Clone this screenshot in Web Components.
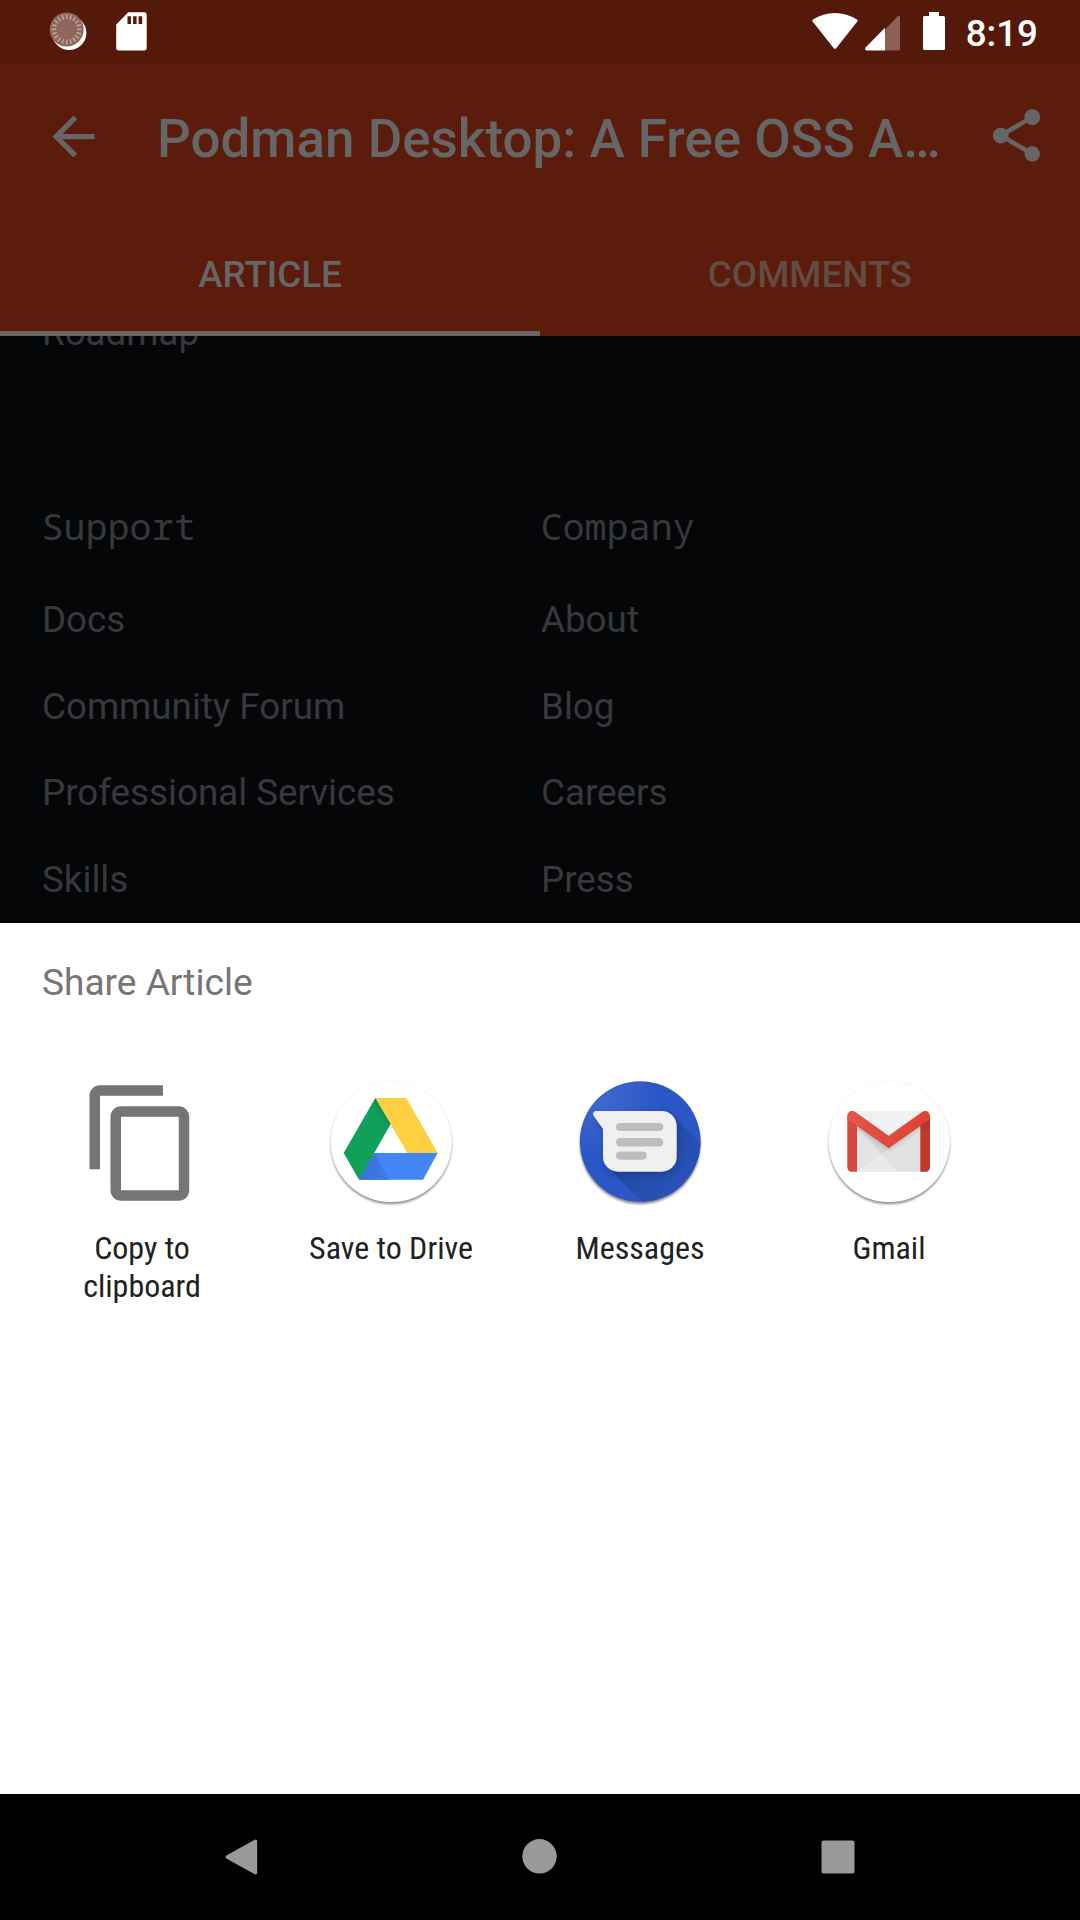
<!DOCTYPE html>
<html lang="en">
<head>
<meta charset="utf-8">
<title>Share Article</title>
<style>
html,body{margin:0;padding:0;background:#000}
body{width:1080px;height:1920px;overflow:hidden;font-family:Roboto,"Liberation Sans",sans-serif}
</style>
</head>
<body>
<phone-screen>
  <status-bar time="8:19"></status-bar>
  <app-bar>Podman Desktop: A Free OSS A…</app-bar>
  <tab-bar><tab-item active>ARTICLE</tab-item><tab-item>COMMENTS</tab-item></tab-bar>
  <article-footer>
    <link-row slot="top">Roadmap</link-row>
    <link-column heading="Support"><link-row>Docs</link-row><link-row>Community Forum</link-row><link-row>Professional Services</link-row><link-row>Skills</link-row></link-column>
    <link-column heading="Company"><link-row>About</link-row><link-row>Blog</link-row><link-row>Careers</link-row><link-row>Press</link-row></link-column>
  </article-footer>
  <share-sheet heading="Share Article">
    <share-target icon="copy">Copy to<br>clipboard</share-target>
    <share-target icon="drive">Save to Drive</share-target>
    <share-target icon="messages">Messages</share-target>
    <share-target icon="gmail">Gmail</share-target>
  </share-sheet>
  <nav-bar></nav-bar>
</phone-screen>
<script>
const define = (name, render) => customElements.define(name, class extends HTMLElement {
  connectedCallback() {
    if (this.shadowRoot) return;
    this.attachShadow({mode: 'open'}).innerHTML = render(this);
  }
});

const ticks = Array.from({length: 20}, (_, i) =>
  `<path d="M18.7 4.300v4.600" transform="rotate(${i * 18} 18.7 19.3)"/>`).join('');

const ICONS = {
  spinner: [40, 44, `<circle cx="21.200" cy="22.800" r="17.200" fill="#fff"/><circle cx="18.700" cy="19.500" r="17" fill="#90675c"/><g stroke="#bfa8a1" stroke-width="1.500">${ticks}</g>`],
  sd: [31, 39, `<path fill="#fff" fill-rule="evenodd" d="M12.3.3H28a2.7 2.7 0 0 1 2.7 2.7v32.8a2.7 2.7 0 0 1-2.7 2.7H2.9a2.7 2.7 0 0 1-2.7-2.7V12.4zM11.5 4.2v7.7H15V4.2zm5.6 0v7.7h3.5V4.2zm5.5 0v7.7h3.6V4.2z"/>`],
  wifi: [46, 38, `<path fill="#fff" d="M1 7.600Q11 .9 23 .9t22 6.700q1 .9.3 1.900L24.200 36.200q-1.200 1.300-2.400 0L.6 9.500Q-.1 8.500 1 7.600z"/>`],
  signal: [35, 36, `<path fill="#8c6055" d="M20 14.600 32.600 1.200q2-1.300 2.400.8V34q0 1.500-1.500 1.500H20z"/><path fill="#fff" d="M20 12.800V35.500H1.200q-1.800-.6-.9-2.700z"/>`],
  battery: [22, 38, `<path fill="#fff" d="M6 0h10v4h4.500q1.500 0 1.500 1.500v31q0 1.500-1.500 1.500h-19Q0 38 0 36.500v-31Q0 4 1.500 4H6z"/>`],
  back: [63, 63, `<path transform="scale(2.625)" fill="#666" d="M20 11H7.830l5.590-5.590L12 4l-8 8 8 8 1.410-1.410L7.830 13H20v-2z"/>`],
  share: [63, 63, `<path transform="scale(2.625)" fill="#666" d="M18 16.080c-.76 0-1.440.3-1.960.77L8.910 12.700c.05-.23.09-.46.09-.7s-.04-.47-.09-.7l7.050-4.110c.54.5 1.250.81 2.040.81 1.660 0 3-1.340 3-3s-1.340-3-3-3-3 1.340-3 3c0 .24.040.47.090.7L8.040 9.810C7.500 9.310 6.790 9 6 9c-1.660 0-3 1.340-3 3s1.340 3 3 3c.79 0 1.500-.31 2.040-.81l7.120 4.160c-.05.21-.08.43-.08.65 0 1.610 1.310 2.920 2.920 2.920s2.920-1.310 2.920-2.920-1.310-2.920-2.920-2.920z"/>`],
  copy: [126, 126, `<path transform="scale(5.250)" fill="#757575" d="M16 1H4c-1.100 0-2 .9-2 2v14h2V3h12V1zm3 4H8c-1.100 0-2 .9-2 2v14c0 1.100.9 2 2 2h11c1.100 0 2-.9 2-2V7c0-1.100-.9-2-2-2zm0 16H8V7h11v14z"/>`],
  drive: [126, 126, `
    <defs>
      <filter id="s" x="-10%" y="-10%" width="120%" height="120%"><feGaussianBlur stdDeviation="1.300"/></filter>
      <linearGradient id="g" gradientUnits="userSpaceOnUse" x1="62" y1="33" x2="52" y2="39"><stop offset="0" stop-color="#0b8349"/><stop offset="1" stop-color="#119f5a"/></linearGradient>
      <linearGradient id="b" gradientUnits="userSpaceOnUse" x1="36" y1="88" x2="60" y2="98"><stop offset="0" stop-color="#3a6fd9"/><stop offset="1" stop-color="#3f7ce8"/></linearGradient>
    </defs>
    <circle cx="63.200" cy="63.800" r="60.500" fill="#000" opacity=".42" filter="url(#s)"/>
    <circle cx="63.200" cy="61.400" r="60.700" fill="#f1f1f1"/><circle cx="63.200" cy="61.500" r="60.300" fill="#fff"/>
    <path fill="#4285f5" d="M46 73H109.700L95 99.700H31z"/>
    <path fill="url(#b)" d="M46 73.300 31 99.700H61.500z"/>
    <path fill="#ffcf42" d="M47.300 18H78.300L109.700 73H79.300z"/>
    <path fill="url(#g)" d="M47.300 18 62.700 44 31 99.700 15.700 73z"/>`],
  messages: [126, 126, `
    <defs>
      <filter id="s" x="-10%" y="-10%" width="120%" height="120%"><feGaussianBlur stdDeviation="1.300"/></filter>
      <filter id="t" x="-20%" y="-20%" width="140%" height="140%"><feGaussianBlur stdDeviation="3"/></filter>
      <radialGradient id="g" gradientUnits="userSpaceOnUse" cx="26" cy="20" r="60"><stop offset="0" stop-color="#4067ce"/><stop offset="1" stop-color="#2a56c6"/></radialGradient>
      <linearGradient id="l" gradientUnits="userSpaceOnUse" x1="60" y1="60" x2="110" y2="110"><stop offset="0" stop-color="#2348a0"/><stop offset="1" stop-color="#2853bb"/></linearGradient>
      <clipPath id="c"><circle cx="63.200" cy="61.500" r="60.300"/></clipPath>
    </defs>
    <circle cx="63.200" cy="63.800" r="60.400" fill="#000" opacity=".45" filter="url(#s)"/>
    <circle cx="63.200" cy="61.500" r="60.300" fill="url(#g)"/>
    <g clip-path="url(#c)">
      <path fill="url(#l)" d="M96 36 130 70V130H74L30 87z"/>
      <path fill="#132d70" opacity=".45" filter="url(#t)" d="M18 36 27 52V78q2 16 16 16.500H84q15-1 16-16V48q-4-14-15-14.500z"/>
    </g>
    <path fill="#f0f0f0" d="M18.300 31H84.700a15 15 0 0 1 15 15V76.700a15 15 0 0 1-15 15H41a15 15 0 0 1-15-15V49L16.700 36.100q-1.700-3.400 1.600-5.100z"/>
    <g fill="#bdbdbd"><rect x="39" y="43" width="47.300" height="8" rx="4"/><rect x="39" y="58.100" width="47.300" height="8.400" rx="4.200"/><rect x="39" y="71.500" width="30.700" height="8.200" rx="4.100"/></g>`],
  gmail: [126, 126, `
    <defs>
      <filter id="s" x="-10%" y="-10%" width="120%" height="120%"><feGaussianBlur stdDeviation="1.300"/></filter>
      <filter id="t" x="-20%" y="-20%" width="140%" height="140%"><feGaussianBlur stdDeviation="2"/></filter>
      <linearGradient id="r" x1="0" y1="0" x2="1" y2="0"><stop offset="0" stop-color="#e2574b"/><stop offset=".5" stop-color="#dd4b3e"/><stop offset="1" stop-color="#db4437"/></linearGradient>
      <linearGradient id="d" x1="0" y1="0" x2="0" y2="1"><stop offset="0" stop-color="#aa3127"/><stop offset=".3" stop-color="#c1392b"/></linearGradient>
      <clipPath id="e"><rect x="31" y="31" width="63.300" height="60.700"/></clipPath>
    </defs>
    <circle cx="63.200" cy="63.800" r="60.500" fill="#000" opacity=".42" filter="url(#s)"/>
    <circle cx="63.200" cy="61.400" r="60.700" fill="#f1f1f1"/><circle cx="63.200" cy="61.500" r="60.300" fill="#fff"/>
    <path fill="#e2e2e2" d="M28 31H98V91.700H28z"/>
    <path fill="#eaeaea" d="M31 91 55 74 72.500 91.700H31z"/>
    <path fill="#d6d6d6" d="M31 45 55 74 66 66z"/>
    <path fill="#e4e4e4" d="M31 47V91L55 74z"/>
    <g clip-path="url(#e)"><path fill="none" stroke="#888" stroke-width="5" opacity=".35" filter="url(#t)" d="M24 41 62.700 67.500 101 41"/></g>
    <path fill="#f1f1f1" d="M27 31H98L62.700 57z"/>
    <path fill="#d6493c" d="M21.300 36H31V91.700H25.500a4.200 4.200 0 0 1-4.200-4.200z"/>
    <path fill="url(#d)" d="M94.300 36H104V87.500a4.200 4.200 0 0 1-4.200 4.200H94.300z"/>
    <path fill="#8f2b22" opacity=".35" d="M21.300 38 31 47.500V45.700zM104 38 94.300 48V44z"/>
    <path fill="url(#r)" d="M21.300 39.300V36.500C21.300 31.500 26 29.600 29.700 32.300L62.700 55.700 95.700 32.300C99.400 29.600 104 31.500 104 36.500V39.300L62.700 68.300z"/>`],
  navback: [32, 36, `<path fill="#999" d="M1.300 16.500 29.700.8Q32.200-.2 32.200 2.500V33.500Q32.200 36.200 29.700 35.200L1.300 19.500Q-.3 18 1.300 16.500z"/>`],
  home: [35, 35, `<circle cx="17.500" cy="17.300" r="17.200" fill="#999"/>`],
  recents: [34, 34, `<rect x=".5" y=".5" width="33" height="33" rx="2" fill="#999"/>`]
};

define('ui-icon', el => {
  const [w, h, body] = ICONS[el.getAttribute('name')];
  return `<style>:host{display:block;flex:none;width:${w}px;height:${h}px}svg{display:block;overflow:visible}</style>
  <svg width="${w}" height="${h}" viewBox="0 0 ${w} ${h}">${body}</svg>`;
});

define('phone-screen', () => `<style>:host{display:flex;flex-direction:column;width:1080px;height:1920px;overflow:hidden;background:#000}</style><slot></slot>`);

define('status-bar', el => `<style>
  :host{display:flex;justify-content:space-between;align-items:flex-start;height:63px;background:#541909;color:#fff;box-sizing:border-box;padding:0 42px 0 48px}
  div{display:flex;align-items:flex-start}
  .l{padding-top:10px}.l ui-icon+ui-icon{margin:2px 0 0 28px}
  .r{padding-top:12px}
  .time{font-size:36.750px;font-weight:500;line-height:44px;margin-left:21px}
  </style>
  <div class="l"><ui-icon name="spinner"></ui-icon><ui-icon name="sd"></ui-icon></div>
  <div class="r"><ui-icon name="wifi"></ui-icon><ui-icon name="signal" style="margin:2.500px 0 0 7px"></ui-icon><ui-icon name="battery" style="margin-left:23px"></ui-icon><span class="time">${el.getAttribute('time')}</span></div>`);

define('app-bar', () => `<style>
  :host{display:flex;align-items:center;height:147px;background:#5b1c0b;color:#666;box-sizing:border-box;padding:0 32px 0 42px}
  h1{flex:1;margin:0;padding:4px 0 0 52px;font-size:52.960px;font-weight:500;line-height:62px;white-space:nowrap}
  ui-icon:last-child{margin-top:-2px}
  </style><ui-icon name="back"></ui-icon><h1><slot></slot></h1><ui-icon name="share"></ui-icon>`);

define('tab-bar', () => `<style>:host{display:flex;height:126px;background:#5b1c0b}</style><slot></slot>`);
define('tab-item', () => `<style>
  :host{flex:1;display:flex;align-items:center;justify-content:center;box-sizing:border-box;padding-top:8px;font-size:36.750px;font-weight:500;color:#634c46;border-bottom:5px solid transparent}
  :host([active]){color:#666;border-bottom-color:#666}
  </style><slot></slot>`);

define('article-footer', () => `<style>
  :host{display:flex;flex-direction:column;height:587px;overflow:hidden;background:#050608;color:#37383d;box-sizing:border-box;padding-left:42px}
  .top{margin:-47.300px 0 120.700px}
  .cols{display:grid;grid-template-columns:499px 1fr}
  </style><div class="top"><slot name="top"></slot></div><div class="cols"><slot></slot></div>`);
define('link-column', el => `<style>
  :host{display:block}
  h2{margin:0 0 20.500px -.6px;font:400 36.750px/60px "Noto Sans Mono","Droid Sans Mono","DejaVu Sans Mono",monospace}
  </style><h2>${el.getAttribute('heading')}</h2><slot></slot>`);
define('link-row', () => `<style>:host{display:flex;align-items:center;height:86.600px;font-size:36.750px;white-space:nowrap}</style><slot></slot>`);

define('share-sheet', el => `<style>
  :host{display:block;height:871px;background:#fff}
  h2{margin:0;padding:38px 0 0 42px;height:119px;font-size:37.100px;font-weight:400;line-height:44px;color:#757575}
  .grid{display:grid;grid-template-columns:repeat(4,249px);padding-left:17.500px}
  </style><h2>${el.getAttribute('heading')}</h2><div class="grid"><slot></slot></div>`);
define('share-target', el => `<style>
  :host{display:flex;flex-direction:column;align-items:center;gap:23px}
  .label{font-family:"Roboto Condensed",Roboto,sans-serif;font-stretch:75%;font-size:32px;line-height:38px;text-align:center;color:#212121}
  </style><ui-icon name="${el.getAttribute('icon')}"></ui-icon><div class="label"><slot></slot></div>`);

define('nav-bar', () => `<style>
  :host{display:flex;justify-content:center;height:126px;background:#000;box-sizing:border-box;padding:0 2px 1px 0}
  div{width:298.500px;display:flex;align-items:center;justify-content:center}
  </style><div><ui-icon name="navback"></ui-icon></div><div><ui-icon name="home"></ui-icon></div><div><ui-icon name="recents"></ui-icon></div>`);
</script>
</body>
</html>
